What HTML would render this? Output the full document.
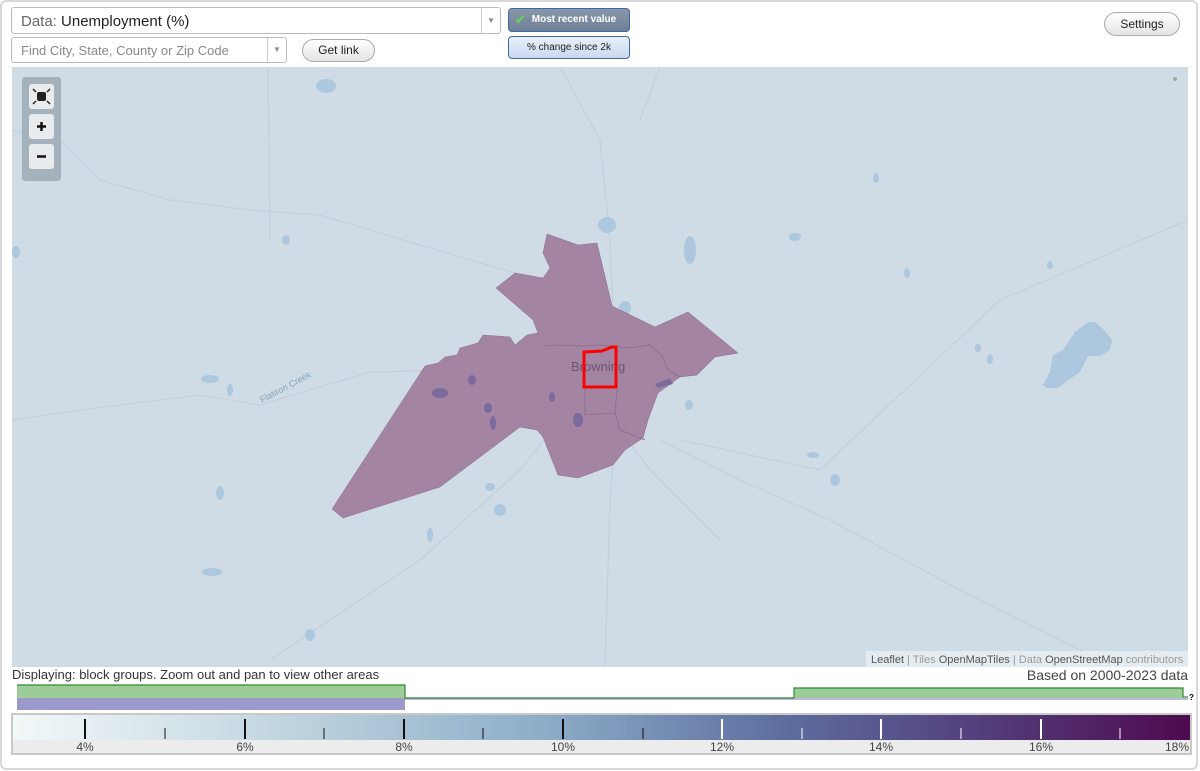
<!DOCTYPE html>
<html><head><meta charset="utf-8"><style>
*{box-sizing:border-box}
body{margin:0;width:1200px;height:771px;background:#fff;font-family:"Liberation Sans",sans-serif;position:relative;overflow:hidden}
.frame{position:absolute;left:0;top:0;width:1198px;height:770px;border:2px solid #d8d8d8;border-radius:6px}
.sel{position:absolute;background:#fff;border:1px solid #bbb;border-radius:3px;font-size:14px;color:#222}
.arrow{position:absolute;right:0;top:0;bottom:0;width:19px;border-left:1px solid #ccc;color:#888;font-size:8px;text-align:center}
.btn{position:absolute;border:1px solid #aaa;border-radius:12px;background:linear-gradient(#fff,#e4e4e4);font-size:12px;text-align:center;color:#222}
.tog{position:absolute;border:1px solid #3a6aa0;border-radius:4px;font-size:10px;text-align:center}
.lbl{position:absolute;font-size:13px;color:#333}
</style></head><body>
<div class="frame"></div>
<div class="sel" style="left:11px;top:7px;width:490px;height:27px;padding:5px 9px;font-size:15px"><span style="color:#666">Data:</span> Unemployment (%)<div class="arrow" style="line-height:25px">▼</div></div>
<div class="sel" style="left:11px;top:37px;width:276px;height:26px;padding:5px 9px;font-size:13px;color:#888">Find City, State, County or Zip Code<div class="arrow" style="line-height:24px">▼</div></div>
<div class="btn" style="left:302px;top:39px;width:73px;height:23px;line-height:21px">Get link</div>
<div class="tog" style="left:508px;top:8px;width:122px;height:24px;line-height:22px;background:linear-gradient(#8a97aa,#6f7f96);color:#fff;font-weight:bold;padding-left:10px"><span style="position:absolute;left:6px;top:0;color:#6c6;font-size:13px">✔</span>Most recent value</div>
<div class="tog" style="left:508px;top:36px;width:122px;height:23px;line-height:21px;background:linear-gradient(#e8f0fa,#c9d9ee);color:#222">% change since 2k</div>
<div class="btn" style="left:1104px;top:12px;width:76px;height:24px;line-height:22px">Settings</div>

<svg style="position:absolute;left:12px;top:67px" width="1176" height="600" viewBox="12 67 1176 600">
<rect x="12" y="67" width="1176" height="600" fill="#cfdce6"/>
<g fill="none" stroke="#c3d1dc" stroke-width="1.3">
<path d="M12 420 L80 410 L200 395 L260 405 L370 372 L560 368 L650 374"/>
<path d="M12 130 L60 140 L100 180 L170 200 L250 210 L320 215 L470 260 L540 280"/>
<path d="M270 660 L420 560 L520 470 L560 420 L580 390"/>
<path d="M660 440 L740 480 L830 520 L960 590 L1100 660"/>
<path d="M680 440 L820 470 L1000 300 L1188 220"/>
<path d="M560 67 L600 140 L610 240 L615 360 L620 430 L650 470 L720 540"/>
<path d="M615 430 L610 500 L605 667"/>
<path d="M268 67 L270 240"/>
<path d="M660 67 L640 120"/>
</g>
<g fill="#acc7de">
<path d="M1088 322 L1095 322 L1104 330 L1112 340 L1110 350 L1100 356 L1088 356 L1080 372 L1067 381 L1058 388 L1047 388 L1043 385 L1050 372 L1053 355 L1063 350 L1075 332 Z"/>
<ellipse cx="690" cy="250" rx="6" ry="14"/><ellipse cx="607" cy="225" rx="9" ry="8"/><ellipse cx="625" cy="308" rx="6" ry="7"/>
<ellipse cx="326" cy="86" rx="10" ry="7"/><ellipse cx="210" cy="379" rx="9" ry="4"/><ellipse cx="230" cy="390" rx="3" ry="6"/>
<ellipse cx="795" cy="237" rx="6" ry="4"/><ellipse cx="876" cy="178" rx="3" ry="5"/><ellipse cx="907" cy="273" rx="3" ry="5"/>
<ellipse cx="689" cy="405" rx="4" ry="5"/><ellipse cx="813" cy="455" rx="6" ry="3"/><ellipse cx="835" cy="480" rx="5" ry="6"/>
<ellipse cx="500" cy="510" rx="6" ry="6"/><ellipse cx="443" cy="428" rx="5" ry="5"/><ellipse cx="212" cy="572" rx="10" ry="4"/>
<ellipse cx="220" cy="493" rx="4" ry="7"/><ellipse cx="310" cy="635" rx="5" ry="6"/><ellipse cx="990" cy="359" rx="3" ry="5"/>
<ellipse cx="978" cy="348" rx="3" ry="4"/><ellipse cx="286" cy="240" rx="4" ry="5"/><ellipse cx="16" cy="252" rx="4" ry="6"/>
<ellipse cx="430" cy="535" rx="3" ry="7"/><ellipse cx="490" cy="487" rx="5" ry="4"/><ellipse cx="1050" cy="265" rx="3" ry="4"/>
</g>
<path fill="#a484a3" stroke="#8b6a8c" stroke-width="0.5" d="M332 509 L343 518 L440 487 L520 427 L537 430 L543 437 L558 475 L578 478 L613 465 L625 450 L643 438 L648 420 L658 393 L680 377 L697 375 L715 357 L738 353 L688 312 L655 327 L612 306 L597 243 L578 245 L547 234 L543 253 L550 268 L543 278 L515 273 L496 288 L533 320 L538 333 L527 335 L515 345 L510 337 L483 335 L478 343 L460 348 L457 355 L445 357 L438 363 L425 366 Z"/>
<g fill="none" stroke="#8b6a8c" stroke-width="0.8">
<path d="M545 346 L555 345 L580 346 L600 345 L630 348 L650 345 L662 356 L668 370 L680 377"/>
<path d="M585 388 L585 415 L615 413 L617 390"/><path d="M615 413 L620 430 L645 440"/>
</g>
<g fill="#7d6a9d"><ellipse cx="440" cy="393" rx="8" ry="5"/><ellipse cx="472" cy="380" rx="4" ry="5"/><ellipse cx="488" cy="408" rx="4" ry="5"/><ellipse cx="493" cy="423" rx="3" ry="7"/><ellipse cx="578" cy="420" rx="5" ry="7"/><ellipse cx="552" cy="397" rx="3" ry="5"/><path d="M655 384 L670 378 L673 384 L658 388 Z"/></g>
<text x="571" y="371" font-size="13" fill="#6a5570" font-family="Liberation Sans,sans-serif">Browning</text>
<path d="M584 352 L602 351 L612 347 L616 347 L616 387 L584 387 Z" fill="none" stroke="#f00" stroke-width="3"/>
<text x="262" y="403" font-size="9" fill="#8aa4b8" transform="rotate(-28 262 403)" font-family="Liberation Sans,sans-serif">Flatiron Creek</text>
<circle cx="1175" cy="79" r="2" fill="#9aa"/>
<rect x="22" y="77" width="39" height="104" rx="3" fill="#9aa7b2" opacity="0.8"/>
<rect x="29" y="84" width="25" height="25" rx="3" fill="#e8ecef"/>
<rect x="29" y="114" width="25" height="25" rx="3" fill="#e8ecef"/>
<rect x="29" y="144" width="25" height="25" rx="3" fill="#e8ecef"/>
<rect x="37" y="92" width="9" height="9" rx="2" fill="#222"/>
<g stroke="#222" stroke-width="1.5"><path d="M33 89 L36 92 M50 89 L47 92 M33 104 L36 101 M50 104 L47 101"/></g>
<path d="M37 126.5 H46 M41.5 122 V131" stroke="#111" stroke-width="2.5"/>
<path d="M37 156.5 H46" stroke="#111" stroke-width="2.5"/>
<rect x="866" y="651" width="322" height="16" fill="#e8eef2" opacity="0.85"/>
<text x="871" y="663" font-size="11" fill="#999" font-family="Liberation Sans,sans-serif"><tspan fill="#555">Leaflet</tspan> | Tiles <tspan fill="#555">OpenMapTiles</tspan> | Data <tspan fill="#555">OpenStreetMap</tspan> contributors</text>
</svg>

<div class="lbl" style="left:12px;top:667px">Displaying: block groups. Zoom out and pan to view other areas</div>
<div class="lbl" style="right:12px;top:667px;font-size:14px;color:#444">Based on 2000-2023 data</div>
<svg style="position:absolute;left:0;top:680px" width="1200" height="35">
<rect x="17" y="5" width="388" height="13" fill="#9ccc98"/>
<rect x="17" y="18" width="388" height="12" fill="#9b99cc"/>
<path d="M405 19 H1188" stroke="#a8a0d0" stroke-width="1.5"/>
<rect x="794" y="8" width="389" height="10" fill="#9ccc98"/>
<path d="M17 5 H405 V18 H794 V8 H1183 V17 H1188" fill="none" stroke="#2e8b2e" stroke-width="1.2"/>
<text x="1189" y="20" font-size="8" font-weight="bold">?</text>
</svg>
<div style="position:absolute;left:11px;top:713px;width:1181px;height:42px;border:2px solid #c8c8c8;background:#ececec"></div>
<svg style="position:absolute;left:13px;top:715px" width="1177" height="38">
<defs><linearGradient id="g" x1="0" x2="1"><stop offset="0" stop-color="#f3f8f9"/><stop offset="0.2" stop-color="#c7dae3"/><stop offset="0.45" stop-color="#8dadc8"/><stop offset="0.65" stop-color="#5e6fa0"/><stop offset="0.82" stop-color="#533f7d"/><stop offset="1" stop-color="#4e0a4e"/></linearGradient></defs>
<rect x="0" y="0" width="1177" height="25" fill="url(#g)"/>
<g stroke="#111" stroke-width="2"><path d="M72 4 V24 M232 4 V24 M391 4 V24 M550 4 V24"/></g>
<g stroke="#111" stroke-width="1"><path d="M152 13 V24 M311 13 V24 M470 13 V24 M630 13 V24"/></g>
<g stroke="#fff" stroke-width="2"><path d="M709 4 V24 M868 4 V24 M1028 4 V24"/></g>
<g stroke="#fff" stroke-width="1"><path d="M789 13 V24 M948 13 V24 M1107 13 V24"/></g>
<g font-size="12" fill="#444" font-family="Liberation Sans,sans-serif" text-anchor="middle">
<text x="72" y="36">4%</text><text x="232" y="36">6%</text><text x="391" y="36">8%</text><text x="550" y="36">10%</text><text x="709" y="36">12%</text><text x="868" y="36">14%</text><text x="1028" y="36">16%</text><text x="1164" y="36">18%</text></g>
</svg>
</body></html>
